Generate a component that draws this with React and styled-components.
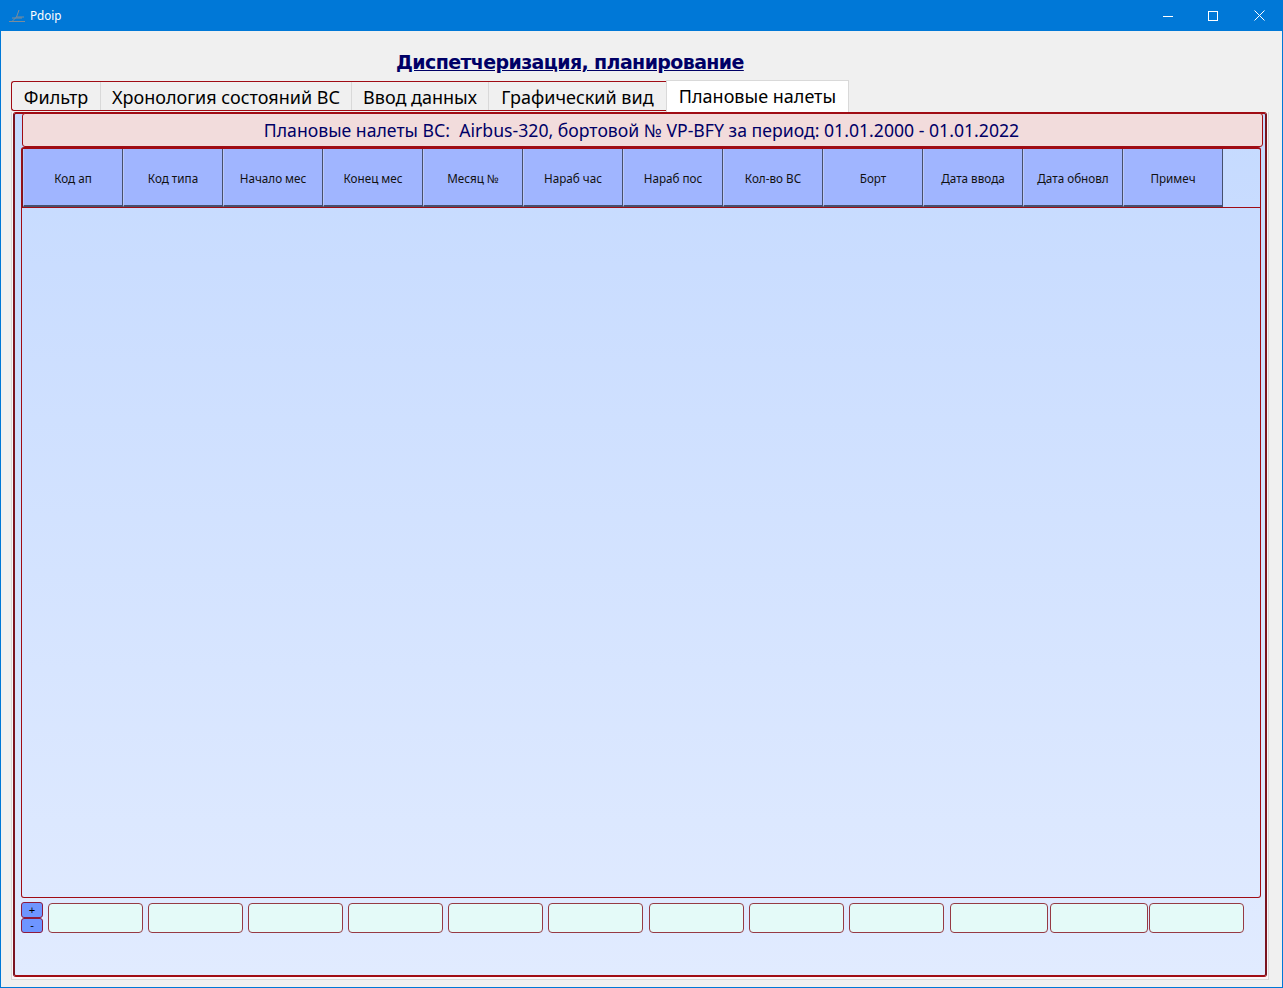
import React from 'react'
import styled, { createGlobalStyle } from 'styled-components'

const columns = ['Код ап', 'Код типа', 'Начало мес', 'Конец мес', 'Месяц №', 'Нараб час', 'Нараб пос', 'Кол-во ВС', 'Борт', 'Дата ввода', 'Дата обновл', 'Примеч']
const tabs = ['Фильтр', 'Хронология состояний ВС', 'Ввод данных', 'Графический вид']
const fields = [
  { width: 95, gap: 5 }, { width: 95, gap: 5 }, { width: 95, gap: 5 }, { width: 95, gap: 5 },
  { width: 95, gap: 5 }, { width: 95, gap: 6 }, { width: 95, gap: 5 }, { width: 95, gap: 5 },
  { width: 95, gap: 6 }, { width: 98, gap: 2 }, { width: 98, gap: 1 }, { width: 95, gap: 0 },
]

const GlobalStyle = createGlobalStyle`
  html, body { margin: 0; padding: 0; background: #f0f0f0; }
  body { font-family: "DejaVu Sans", "Noto Sans", sans-serif; }
`

const Window = styled.div`
  box-sizing: border-box;
  width: 1283px;
  height: 988px;
  display: flex;
  flex-direction: column;
  border: 1px solid #0078d7;
  border-top: none;
  background: #f0f0f0;
`

const TitleBar = styled.div`
  height: 31px;
  flex: none;
  display: flex;
  align-items: center;
  margin: 0 -1px;
  padding-left: 9px;
  background: #0078d7;
  color: #fff;
`

const TitleText = styled.span`
  margin: 0 0 1px 4px;
  font-family: "Noto Sans", sans-serif;
  font-size: 11.7px;
`

const WindowButtons = styled.div`
  margin-left: auto;
  display: flex;
`

const WindowButton = styled.div`
  width: ${p => p.$width}px;
  height: 31px;
  display: flex;
  align-items: center;
  justify-content: center;
`

const Heading = styled.h1`
  height: 49px;
  flex: none;
  box-sizing: border-box;
  margin: 0;
  padding: 18px 0 0 395px;
  font-size: 19px;
  line-height: 26px;
  font-weight: bold;
  letter-spacing: -0.62px;
  color: #000066;
  text-decoration: underline;
  white-space: nowrap;
`

const TabRow = styled.div`
  height: 32px;
  flex: none;
  display: flex;
  padding-left: 10px;
`

const TabGroup = styled.div`
  box-sizing: border-box;
  height: 30px;
  margin-top: 1px;
  display: flex;
  border: 1px solid #a00c14;
  border-right: none;
  border-radius: 3px 0 0 3px;
  background: #f0f0f0;
`

const Tab = styled.div`
  box-sizing: border-box;
  width: ${p => p.$width}px;
  height: 28px;
  padding-top: 2px;
  display: flex;
  align-items: center;
  justify-content: center;
  font-family: "Noto Sans", sans-serif;
  font-size: 18px;
  color: #000;
  white-space: nowrap;
  border-left: ${p => (p.$first ? 'none' : '1px solid #d9d9d9')};
`

const ActiveTab = styled.div`
  box-sizing: border-box;
  width: 183px;
  height: 32px;
  padding-bottom: 2px;
  display: flex;
  align-items: center;
  justify-content: center;
  font-family: "Noto Sans", sans-serif;
  font-size: 18px;
  color: #000;
  background: #fff;
  border: 1px solid #d9d9d9;
  border-bottom: none;
  white-space: nowrap;
`

const PaneFrame = styled.div`
  box-sizing: border-box;
  width: 1258px;
  height: 868px;
  margin-left: 10px;
  padding: 0 1px 2px 1px;
  background: #fbf6f8;
  border: 1px solid #d9d9d9;
  border-top: none;
`

const Pane = styled.div`
  box-sizing: border-box;
  height: 100%;
  display: flex;
  flex-direction: column;
  padding: 0 0 0 6px;
  border: 2px solid #7a1420;
  border-top-color: #a00c14;
  border-bottom-color: #a00c14;
  border-radius: 3px;
  background: linear-gradient(180deg, #c5daff 0%, #e1ebff 100%);
`

const Banner = styled.div`
  box-sizing: border-box;
  height: 34px;
  flex: none;
  margin: -1px 2px 0 1px;
  padding-right: 2px;
  display: flex;
  align-items: center;
  justify-content: center;
  font-family: "Noto Sans", sans-serif;
  font-size: 17.65px;
  color: #000066;
  background: #f2dcdc;
  border: 1px solid #a00c14;
  border-radius: 3px;
  white-space: pre;
`

const TableFrame = styled.div`
  box-sizing: border-box;
  width: 1240px;
  height: 751px;
  flex: none;
  border: 1px solid #a00c14;
  border-top-width: 2px;
  border-radius: 3px;
`

const HeadRow = styled.div`
  display: flex;
  height: 59px;
  box-sizing: border-box;
  border-bottom: 1px solid #a00c14;
  border-left: 1px solid #7a1420;
`

const HeadCell = styled.div`
  box-sizing: border-box;
  width: 100px;
  height: 58px;
  padding-top: 2px;
  display: flex;
  align-items: center;
  justify-content: center;
  font-family: "Noto Sans", sans-serif;
  font-size: 11.7px;
  color: #111;
  background: #a0b5ff;
  border-left: 1px solid #bcc8f4;
  border-right: 1px solid #46506e;
  border-bottom: 2px solid #46506e;
`

const Footer = styled.div`
  display: flex;
  align-items: flex-end;
  margin-top: 4px;
`

const Stepper = styled.div`
  width: 22px;
  flex: none;
  display: flex;
  flex-direction: column;
  margin-right: 5px;
`

const StepButton = styled.div`
  box-sizing: border-box;
  height: 15.5px;
  display: flex;
  align-items: center;
  justify-content: center;
  font-family: "Liberation Sans", sans-serif;
  font-size: 11px;
  color: #000;
  background: #6e95ff;
  border: 1px solid #8e1a3c;
  border-radius: 3px;
`

const Field = styled.div`
  box-sizing: border-box;
  width: ${p => p.$width}px;
  height: 30px;
  margin-right: ${p => p.$gap}px;
  background: #e4faf8;
  border: 1px solid #963a44;
  border-radius: 4px;
`

const PlaneIcon = () => (
  <svg width="17" height="14" viewBox="0 0 17 14" fill="none" stroke="#7d8c99" strokeWidth="1">
    <path d="M0 12.5L16 12.5M3 12.5L7.5 8H15M7.5 8L10 1M3 9L13 9" />
  </svg>
)

const MinimizeIcon = () => (
  <svg width="10" height="10" viewBox="0 0 10 10" stroke="#fff" strokeWidth="1">
    <path d="M0 5.5H10" />
  </svg>
)

const MaximizeIcon = () => (
  <svg width="10" height="10" viewBox="0 0 10 10" fill="none" stroke="#fff" strokeWidth="1">
    <rect x="0.5" y="0.5" width="9" height="9" />
  </svg>
)

const CloseIcon = () => (
  <svg width="11" height="11" viewBox="0 0 11 11" stroke="#fff" strokeWidth="1">
    <path d="M0.5 0.5L10.5 10.5M10.5 0.5L0.5 10.5" />
  </svg>
)

const App = () => {
  const tabWidths = [88, 251, 137, 178]

  return (
    <React.Fragment>
      <GlobalStyle />
      <Window>
        <TitleBar>
          <PlaneIcon />
          <TitleText>Pdoip</TitleText>
          <WindowButtons>
            <WindowButton $width={46}><MinimizeIcon /></WindowButton>
            <WindowButton $width={44}><MaximizeIcon /></WindowButton>
            <WindowButton $width={48}><CloseIcon /></WindowButton>
          </WindowButtons>
        </TitleBar>
        <Heading>Диспетчеризация, планирование</Heading>
        <TabRow>
          <TabGroup>
            {tabs.map((tab, i) => (
              <Tab key={tab} $first={i === 0} $width={tabWidths[i]}>{tab}</Tab>
            ))}
          </TabGroup>
          <ActiveTab>Плановые налеты</ActiveTab>
        </TabRow>
        <PaneFrame>
          <Pane>
            <Banner>Плановые налеты ВС:  Airbus-320, бортовой № VP-BFY за период: 01.01.2000 - 01.01.2022</Banner>
            <TableFrame>
              <HeadRow>
                {columns.map(col => <HeadCell key={col}>{col}</HeadCell>)}
              </HeadRow>
            </TableFrame>
            <Footer>
              <Stepper>
                <StepButton>+</StepButton>
                <StepButton>-</StepButton>
              </Stepper>
              {fields.map((field, i) => (
                <Field key={i} $width={field.width} $gap={field.gap} />
              ))}
            </Footer>
          </Pane>
        </PaneFrame>
      </Window>
    </React.Fragment>
  )
}

export default App
